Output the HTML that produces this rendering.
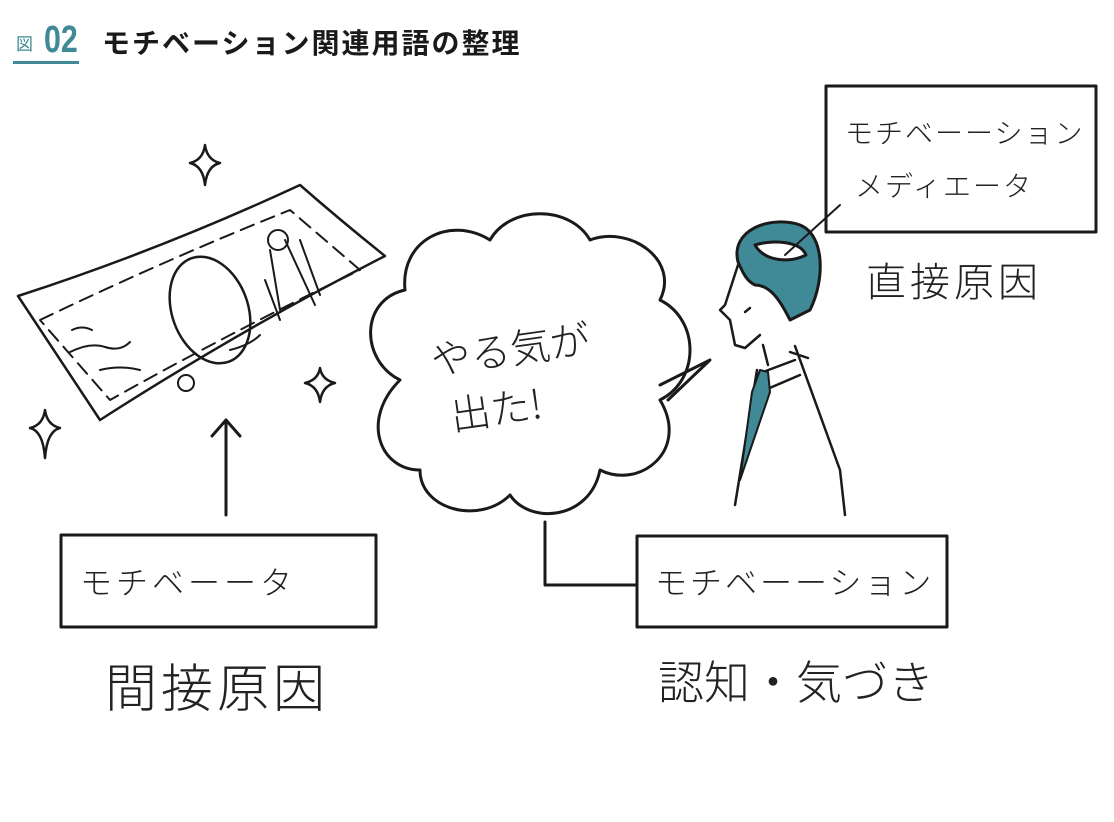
<!DOCTYPE html>
<html><head><meta charset="utf-8"><style>
body{margin:0;background:#fff;width:1114px;height:822px;overflow:hidden;font-family:"Liberation Sans","Noto Sans CJK JP",sans-serif}
.t{position:absolute;white-space:nowrap;color:#1a1a1a}
.h{font-family:"Noto Sans CJK JP",sans-serif;font-weight:300;color:#222}
</style></head><body>
<div class="t" style="left:16px;top:30px;font-size:17px;color:#3f8a96;font-family:'Noto Sans CJK JP',sans-serif">図</div>
<div class="t" style="left:44px;top:19px;font-size:38px;color:#3f8a96;font-family:'Liberation Sans Narrow','Liberation Sans',sans-serif;font-weight:bold;transform:scaleX(0.8);transform-origin:left">02</div>
<div style="position:absolute;left:13px;top:61px;width:66px;height:3px;background:#3f8a96"></div>
<div class="t" style="left:102px;top:22px;font-size:28px;font-weight:bold;letter-spacing:2px;font-family:'Noto Sans CJK JP',sans-serif">モチベーション関連用語の整理</div>

<svg width="1114" height="822" style="position:absolute;left:0;top:0" fill="none" stroke="#1a1a1a" stroke-width="3" stroke-linecap="round" stroke-linejoin="round">
<rect x="826" y="86" width="270" height="146"/>
<rect x="61" y="535" width="315" height="92"/>
<rect x="637" y="536" width="310" height="91"/>
<path d="M545 522 V585 H636"/>
<path d="M226 515 V420 M212 436 L226 420 L240 436"/>
<path d="M400 380 C360 360 360 300 405 290 C400 240 450 215 490 240 C510 205 570 205 590 240 C630 225 680 260 660 300 C700 320 700 380 660 400 C690 450 640 490 600 470 C590 520 530 525 510 495 C480 525 420 510 420 470 C380 470 360 420 400 380 Z"/>
<path d="M660 385 L710 360 L668 400"/>
<path d="M18 296 Q160 250 300 185 Q340 220 385 256 Q240 330 100 420 Q60 360 18 296 Z" stroke-width="2.5"/>
<path d="M40 320 Q165 260 290 210 L360 270 Q235 330 110 400 Z" stroke-width="2" stroke-dasharray="14 8"/>
<ellipse cx="210" cy="310" rx="38" ry="55" transform="rotate(-20 210 310)" stroke-width="2.5"/>
<circle cx="186" cy="383" r="8" stroke-width="2"/>
<path d="M72 330 q10 -5 20 0 M70 352 q20 -10 35 -5 q15 5 25 -5 M100 370 q20 -5 40 0 M230 350 q20 -5 30 -15" stroke-width="2"/>
<path d="M270 250 l10 60 M285 240 l30 65 M300 240 l20 55 M265 280 l15 40" stroke-width="2"/>
<circle cx="278" cy="240" r="10" stroke-width="2"/>
<path d="M205 145 Q207 160 220 163 Q207 166 205 185 Q203 166 190 163 Q203 160 205 145Z" stroke-width="2.5"/>
<path d="M320 368 Q322 380 335 383 Q322 386 320 402 Q318 386 305 383 Q318 380 320 368Z" stroke-width="2.5"/>
<path d="M45 410 Q47 425 60 428 Q47 431 45 458 Q43 431 30 428 Q43 425 45 410Z" stroke-width="2.5"/>
<path d="M738 262 C730 230 770 215 800 225 C825 235 825 280 810 310 L790 320 C780 300 770 285 755 285 C745 280 742 270 738 262Z" fill="#3f8a96"/>
<path d="M755 245 C770 240 800 240 806 255 C790 263 765 262 755 245Z" fill="#fff"/>
<path d="M785 255 L840 205" stroke-width="2"/>
<path d="M738 265 L725 305 L720 310 L730 320 L735 345 L745 348 L760 335 M745 312 l5 -4" stroke-width="2.5"/>
<path d="M763 345 L768 365 M790 352 L808 358 M763 372 L795 360 M765 390 L800 375 M795 346 L840 470 L845 515 M757 370 L735 505" stroke-width="2.5"/>
<path d="M760 370 L768 372 L770 392 L740 480 L752 392Z" fill="#3f8a96" stroke-width="2"/>
</svg>

<div class="t h" style="left:845px;top:112px;font-size:28px;letter-spacing:2px">モチベーーション</div>
<div class="t h" style="left:855px;top:165px;font-size:28px;letter-spacing:2px">メディエータ</div>
<div class="t h" style="left:866px;top:250px;font-size:40px;letter-spacing:4px">直接原因</div>
<div class="t h" style="left:430px;top:318px;font-size:40px;transform:rotate(-8deg)">やる気が</div>
<div class="t h" style="left:450px;top:378px;font-size:40px;transform:rotate(-8deg)">出た!</div>
<div class="t h" style="left:80px;top:558px;font-size:32px;letter-spacing:4px">モチベーータ</div>
<div class="t h" style="left:655px;top:558px;font-size:32px;letter-spacing:3px">モチベーーション</div>
<div class="t h" style="left:105px;top:647px;font-size:52px;letter-spacing:4px">間接原因</div>
<div class="t h" style="left:658px;top:647px;font-size:46px;letter-spacing:0px">認知・気づき</div>
</body></html>
